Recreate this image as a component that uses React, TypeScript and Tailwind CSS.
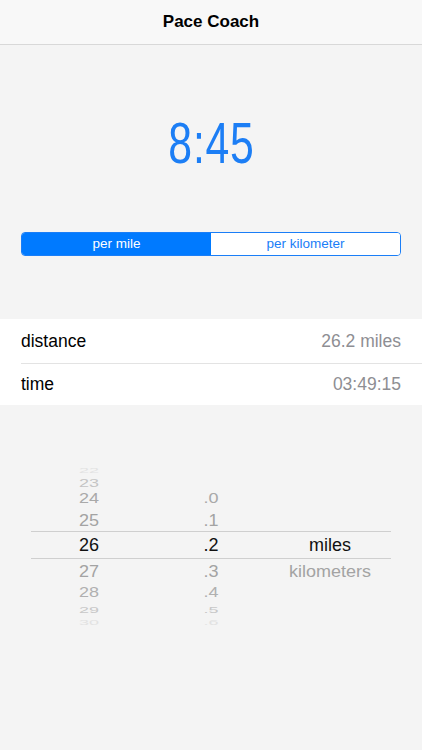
import React from "react";

type Row = {
  h: string;
  num: string;
  dec: string;
  unit: string;
  color: string;
  scale: string;
  selected?: boolean;
};

const rows: Row[] = [
  { h: "h-[12px]", num: "22", dec: "", unit: "", color: "text-[#e2e2e2]", scale: "scale-y-[0.35]" },
  { h: "h-[14px]", num: "23", dec: "", unit: "", color: "text-[#c4c4c4]", scale: "scale-y-[0.6]" },
  { h: "h-[20px]", num: "24", dec: ".0", unit: "", color: "text-[#a9a9a9]", scale: "scale-y-[0.82]" },
  { h: "h-[23px]", num: "25", dec: ".1", unit: "", color: "text-[#a3a3a3]", scale: "scale-y-[0.95]" },
  { h: "h-[28px]", num: "26", dec: ".2", unit: "miles", color: "text-[#111111]", scale: "scale-y-100", selected: true },
  { h: "h-[23px]", num: "27", dec: ".3", unit: "kilometers", color: "text-[#a3a3a3]", scale: "scale-y-[0.95]" },
  { h: "h-[19px]", num: "28", dec: ".4", unit: "", color: "text-[#b0b0b0]", scale: "scale-y-[0.8]" },
  { h: "h-[13px]", num: "29", dec: ".5", unit: "", color: "text-[#c8c8c8]", scale: "scale-y-[0.55]" },
  { h: "h-[10px]", num: "30", dec: ".6", unit: "", color: "text-[#e2e2e2]", scale: "scale-y-[0.35]" },
];

export default function App() {
  return (
    <div
      className="min-h-screen w-full bg-[#f4f4f4] flex flex-col"
      style={{ fontFamily: '"Liberation Sans", Arial, sans-serif' }}
    >
      {/* Header */}
      <div className="h-[45px] bg-[#f8f8f8] border-b border-[#d8d8d8] flex items-center justify-center">
        <span className="text-[17px] font-bold text-black">Pace Coach</span>
      </div>

      {/* Pace display */}
      <div className="pt-[70px] flex justify-center">
        <div className="h-[57px] text-[57px] leading-[57px] text-[#1c7ef5] scale-x-75 tracking-[1px]">
          8:45
        </div>
      </div>

      {/* Segmented control */}
      <div className="mt-[60px] px-[21px]">
        <div className="h-[24px] flex rounded-[4px] border border-[#1a7ef7] overflow-hidden">
          <div className="flex-1 bg-[#007aff] text-white text-[13.5px] flex items-center justify-center">
            per mile
          </div>
          <div className="flex-1 bg-white text-[#1a7ef7] text-[13.5px] flex items-center justify-center">
            per kilometer
          </div>
        </div>
      </div>

      {/* List */}
      <div className="mt-[63px] bg-white">
        <div className="h-[44px] flex items-center justify-between pl-[21px] pr-[21px] text-[17.5px]">
          <span className="text-black">distance</span>
          <span className="text-[#8e8e93]">26.2 miles</span>
        </div>
        <div className="ml-[21px] h-px bg-[#e3e3e3]" />
        <div className="h-[41px] flex items-center justify-between pl-[21px] pr-[21px] text-[17.5px]">
          <span className="text-black">time</span>
          <span className="text-[#8e8e93]">03:49:15</span>
        </div>
      </div>

      {/* Picker */}
      <div className="mt-[57px] mx-[31px] flex flex-col">
        {rows.map((r) => (
          <div
            key={r.num}
            className={`${r.h} grid grid-cols-[116px_128px_110px] items-center overflow-visible text-[18px] leading-none ${r.color} ${
              r.selected ? "border-y border-[#cfcfcf]" : ""
            }`}
          >
            <div className="flex justify-center">
              <span className={`inline-block ${r.scale}`}>{r.num}</span>
            </div>
            <div className="flex justify-center">
              <span className={`inline-block ${r.scale}`}>{r.dec}</span>
            </div>
            <div className="flex justify-center">
              <span className={`inline-block ${r.scale}`}>{r.unit}</span>
            </div>
          </div>
        ))}
      </div>
    </div>
  );
}
